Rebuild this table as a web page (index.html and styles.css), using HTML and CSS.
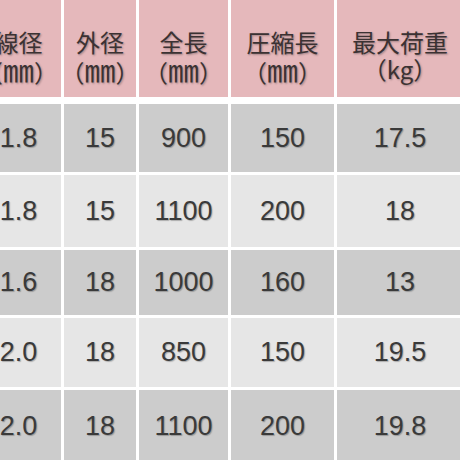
FILE: index.html
```html
<!DOCTYPE html>
<html lang="ja">
<head>
<meta charset="utf-8">
<link rel="stylesheet" href="styles.css">
</head>
<body>
<div class="spec">
  <div class="th"><span class="name">線径</span><span class="unit">（<span class="mm">㎜</span>）</span></div>
  <div class="th"><span class="name">外径</span><span class="unit">（<span class="mm">㎜</span>）</span></div>
  <div class="th"><span class="name">全長</span><span class="unit">（<span class="mm">㎜</span>）</span></div>
  <div class="th"><span class="name">圧縮長</span><span class="unit">（<span class="mm">㎜</span>）</span></div>
  <div class="th"><span class="name">最大荷重</span><span class="unit">（kg）</span></div>

  <div class="td dark">1.8</div><div class="td dark">15</div><div class="td dark">900</div><div class="td dark">150</div><div class="td dark">17.5</div>
  <div class="td light">1.8</div><div class="td light">15</div><div class="td light">1100</div><div class="td light">200</div><div class="td light">18</div>
  <div class="td dark">1.6</div><div class="td dark">18</div><div class="td dark">1000</div><div class="td dark">160</div><div class="td dark">13</div>
  <div class="td light">2.0</div><div class="td light">18</div><div class="td light">850</div><div class="td light">150</div><div class="td light">19.5</div>
  <div class="td dark">2.0</div><div class="td dark">18</div><div class="td dark">1100</div><div class="td dark">200</div><div class="td dark">19.8</div>
</div>
</body>
</html>
```
FILE: styles.css
```css
html, body {
  margin: 0;
  padding: 0;
  background: #ffffff;
  overflow: hidden;
}
body {
  width: 460px;
  height: 460px;
}
.spec {
  display: grid;
  grid-template-columns: 85px 72px 89px 103px 126px;
  grid-template-rows: 101px 68px 72px 65px 69px 72px;
  column-gap: 3px;
  row-gap: 3px;
  margin-left: -24px;
  width: 490px;
}
.th {
  align-self: start;
  height: 97px;
  box-sizing: border-box;
  padding-top: 28px;
  display: flex;
  flex-direction: column;
  align-items: center;
  background: #e5b8bb;
  color: #3b3233;
  font-family: "Noto Sans CJK JP", "Noto Sans", sans-serif;
  font-size: 24px;
  line-height: 27px;
  text-align: center;
  text-shadow: 1px 1px 2px rgba(0, 0, 0, 0.3);
}
.name,
.unit {
  display: block;
  height: 27px;
  white-space: nowrap;
}
.mm {
  font-size: 31px;
  line-height: 27px;
}
.td {
  display: flex;
  align-items: center;
  justify-content: center;
  font-family: "Liberation Sans", Arial, sans-serif;
  font-size: 27px;
  color: #3a3a3a;
  text-shadow: 1px 1px 1px rgba(0, 0, 0, 0.25);
}
.dark {
  background: #cccccc;
}
.light {
  background: #e6e6e6;
}
```
